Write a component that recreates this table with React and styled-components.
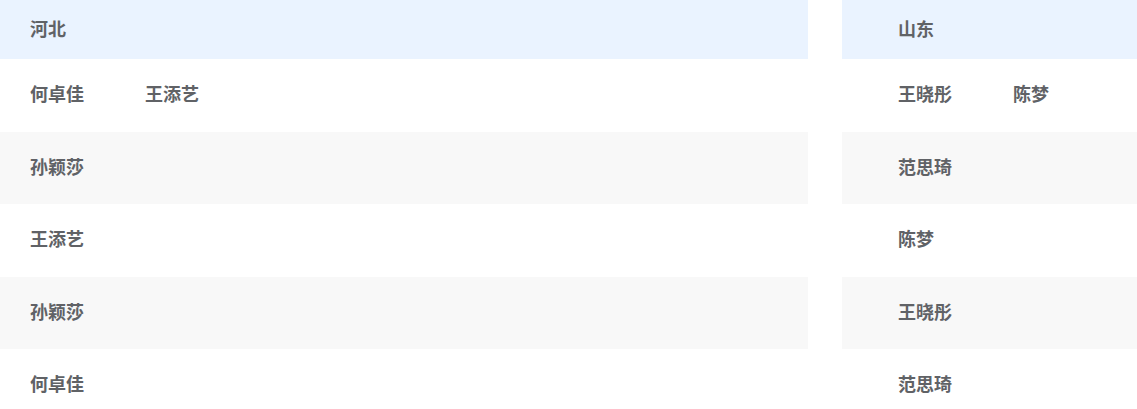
import styled, { createGlobalStyle } from "styled-components";

const GlobalStyle = createGlobalStyle`
  html, body {
    margin: 0;
    padding: 0;
    background: #ffffff;
    overflow: hidden;
  }
  body {
    font-family: "Noto Sans CJK SC", "Microsoft YaHei", sans-serif;
  }
`;

const Board = styled.div`
  display: flex;
  gap: 34px;
  width: 1137px;
`;

const Table = styled.div`
  width: ${(props) => props.width};
  flex: ${(props) => (props.width ? "none" : 1)};
  display: flex;
  flex-direction: column;
`;

const HeadRow = styled.div`
  height: 59px;
  box-sizing: border-box;
  display: flex;
  align-items: center;
  padding-left: ${(props) => props.inset}px;
  padding-bottom: 4px;
  background-color: #eaf3ff;
`;

const Row = styled.div`
  height: 72.5px;
  box-sizing: border-box;
  display: flex;
  align-items: center;
  padding-left: ${(props) => props.inset}px;
  padding-bottom: 4px;
  background-color: ${(props) => (props.striped ? "#f8f8f8" : "#ffffff")};
`;

const Cell = styled.span`
  width: 115px;
  flex: none;
  font-size: 18px;
  font-weight: 700;
  color: #606266;
  line-height: 1;
`;

const provinces = [
  {
    name: "河北",
    width: "808px",
    inset: 30,
    rows: [["何卓佳", "王添艺"], ["孙颖莎"], ["王添艺"], ["孙颖莎"], ["何卓佳"]],
  },
  {
    name: "山东",
    inset: 56,
    rows: [["王晓彤", "陈梦"], ["范思琦"], ["陈梦"], ["王晓彤"], ["范思琦"]],
  },
];

const App = () => {
  return (
    <>
      <GlobalStyle />
      <Board>
        {provinces.map((p) => (
          <Table key={p.name} width={p.width}>
            <HeadRow inset={p.inset}>
              <Cell>{p.name}</Cell>
            </HeadRow>
            {p.rows.map((names, i) => (
              <Row key={i} inset={p.inset} striped={i % 2 === 1}>
                {names.map((n) => (
                  <Cell key={n}>{n}</Cell>
                ))}
              </Row>
            ))}
          </Table>
        ))}
      </Board>
    </>
  );
};

export default App;
